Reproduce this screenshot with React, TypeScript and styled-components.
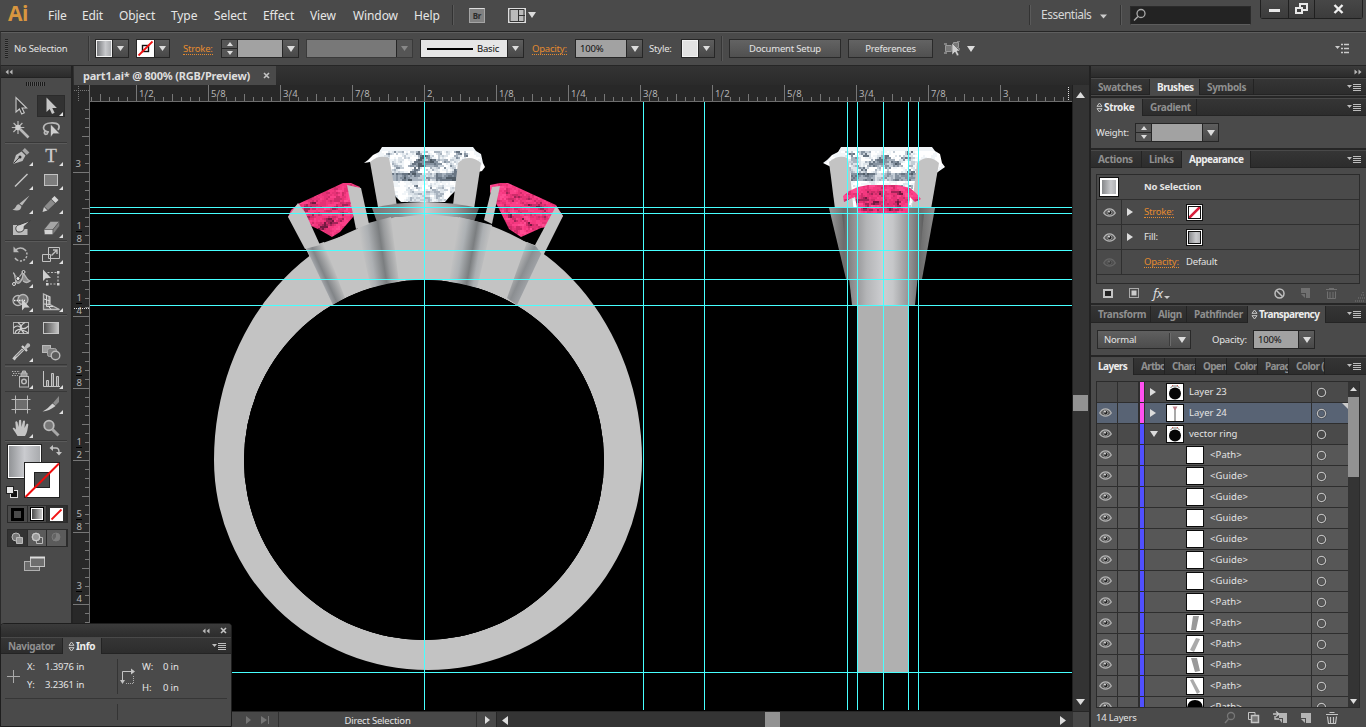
import React from "react";
import styled, { createGlobalStyle } from "styled-components";

const Global = createGlobalStyle`
  * { box-sizing: border-box; }
  body { margin: 0; background: #4a4a4a; overflow: hidden; }
  #root { width: 1366px; height: 727px; }
  svg { display: block; flex: none; }
`;

const UI = `"Noto Sans", "Open Sans", sans-serif`;

/* ---------- shell ---------- */
const App_ = styled.div`
  position: relative;
  width: 1366px;
  height: 727px;
  display: flex;
  flex-direction: column;
  overflow: hidden;
  background: #4a4a4a;
  color: #e4e4e4;
  font: 9.5px/14px ${UI};
  letter-spacing: -0.2px;
  white-space: nowrap;
`;
const Body = styled.div`
  display: flex;
  flex: none;
  height: 661px;
`;
const Spacer = styled.div<{ $w?: number; $h?: number }>`
  flex: none;
  width: ${(p) => p.$w ?? 0}px;
  height: ${(p) => p.$h ?? 0}px;
`;
const Grow = styled.div`
  flex: 1;
`;

/* ---------- menu bar ---------- */
const MenuBar = styled.div`
  height: 31px;
  flex: none;
  display: flex;
  align-items: flex-start;
  background: #4a4a4a;
`;
const Logo = styled.div`
  width: 48px;
  padding-left: 8px;
  font: bold 21px/27px "Open Sans", sans-serif;
  letter-spacing: -0.5px;
  color: #d8963f;
`;
const MenuItem = styled.div<{ $w: number }>`
  width: ${(p) => p.$w}px;
  font: 12px/31px ${UI};
  letter-spacing: -0.1px;
  color: #e6e6e6;
`;
const MenuRule = styled.div`
  width: 2px;
  height: 20px;
  margin-top: 5px;
  background: #333;
  border-right: 1px solid #5a5a5a;
`;
const BridgeIcon = styled.div`
  width: 16px;
  height: 15px;
  margin: 8px 23px 0 15px;
  border: 1px solid #a5a5a5;
  border-top-color: #ddd;
  background: #818181;
  color: #2c2c2c;
  font: bold 8px/13px ${UI};
  text-align: center;
`;
const Workspace = styled.div`
  width: 59px;
  padding-left: 10px;
  font: 12px/30px ${UI};
  letter-spacing: -0.5px;
  color: #d6d6d6;
`;
const Search = styled.div`
  width: 121px;
  height: 19px;
  margin: 6px 9px 0 8px;
  background: #232323;
  border: 1px solid #2b2b2b;
  border-bottom-color: #5c5c5c;
`;
const WinButtons = styled.div`
  display: flex;
  height: 19px;
  width: 103px;
  border: 1px solid #202020;
  border-top: 0;
  border-radius: 0 0 3px 3px;
`;
const WinButton = styled.div<{ $w: number }>`
  width: ${(p) => p.$w}px;
  height: 18px;
  display: flex;
  justify-content: center;
  align-items: center;
  border-right: 1px solid #202020;
  background: linear-gradient(#474747, #3c3c3c);
  &:last-child { border-right: 0; }
`;

/* ---------- control bar ---------- */
const ControlBar = styled.div`
  height: 35px;
  flex: none;
  display: flex;
  align-items: center;
  border-top: 1px solid #262626;
  border-bottom: 1px solid #262626;
  border-left: 1px solid #333;
  box-shadow: inset 0 1px #5e5e5e;
`;
const GripV = styled.div`
  width: 3px;
  height: 19px;
  margin: 0 6px 0 4px;
  background: repeating-linear-gradient(#222 0 1px, #565656 1px 2px);
`;
const Cell = styled.div<{ $w: number }>`
  width: ${(p) => p.$w}px;
  flex: none;
`;
const Link = styled.span`
  color: #e58a2f;
  border-bottom: 1px dotted #e58a2f;
  line-height: 11px;
  display: inline-block;
`;
const Combo = styled.div<{ $w: number; $dim?: boolean }>`
  width: ${(p) => p.$w}px;
  height: 19px;
  flex: none;
  display: flex;
  border: 1px solid ${(p) => (p.$dim ? "#3a3a3a" : "#262626")};
  background: #262626;
`;
const ComboField = styled.div<{ $bg: string }>`
  flex: 1;
  background: ${(p) => p.$bg};
  color: #101010;
  line-height: 17px;
  padding-left: 4px;
  display: flex;
  align-items: center;
  overflow: hidden;
`;
const ComboArrow = styled.div<{ $dim?: boolean }>`
  width: 15px;
  margin-left: 1px;
  display: flex;
  align-items: center;
  justify-content: center;
  background: ${(p) => (p.$dim ? "#555" : "linear-gradient(#5e5e5e, #484848)")};
`;
const Swatch = styled.div<{ $bg: string }>`
  flex: 1;
  margin: 0;
  border: 1px solid #f2f2f2;
  background: ${(p) => p.$bg};
`;
const Spinner = styled.div`
  width: 15px;
  margin-right: 1px;
  display: flex;
  flex-direction: column;
  gap: 1px;
`;
const SpinHalf = styled.div`
  flex: 1;
  background: #565656;
  display: flex;
  align-items: center;
  justify-content: center;
`;
const PushButton = styled.div<{ $w: number }>`
  width: ${(p) => p.$w}px;
  height: 19px;
  border: 1px solid #2a2a2a;
  background: linear-gradient(#636363, #505050);
  text-align: center;
  line-height: 17px;
`;
const BarRule = styled.div`
  width: 2px;
  height: 25px;
  background: #363636;
  border-right: 1px solid #585858;
`;

/* ---------- tool dock ---------- */
const ToolDock = styled.div`
  width: 73px;
  flex: none;
  border-left: 1px solid #2a2a2a;
  border-right: 2px solid #232323;
  background: #4a4a4a;
`;
const DockHead = styled.div<{ $right?: boolean }>`
  height: 12px;
  display: flex;
  align-items: center;
  justify-content: ${(p) => (p.$right ? "flex-end" : "flex-start")};
  padding: 0 4px;
  background: linear-gradient(#3b3b3b, #2b2b2b);
  border-bottom: 1px solid #222;
`;
const GripH = styled.div`
  width: 19px;
  height: 4px;
  margin: 4px 0 8px 25px;
  background: repeating-linear-gradient(90deg, #1a1a1a 0 1px, #5a5a5a 1px 2px);
`;
const ToolGroup = styled.div`
  display: grid;
  grid-template-columns: 30px 30px;
  padding-left: 5px;
`;
const ToolCell = styled.div<{ $on?: boolean }>`
  height: 24px;
  display: flex;
  align-items: center;
  justify-content: center;
  background: ${(p) => (p.$on ? "#323232" : "transparent")};
  background-clip: content-box;
  padding: 1px 1px 1px 1px;
  outline: ${(p) => (p.$on ? "1px solid #2b2b2b" : "none")};
  outline-offset: -2px;
`;
const GroupRule = styled.div<{ $h?: number }>`
  height: ${(p) => p.$h ?? 2}px;
  margin: 0 4px;
  border-top: 1px solid #383838;
  border-bottom: ${(p) => ((p.$h ?? 2) > 1 ? "1px solid #5a5a5a" : "0")};
`;
const ColorButtons = styled.div<{ $gap: number }>`
  display: flex;
  width: 61px;
  height: 18px;
  margin: ${(p) => p.$gap}px 0 6px 6px;
  border: 1px solid #2b2b2b;
  background: #3e3e3e;
`;
const ColorButton = styled.div<{ $on?: boolean }>`
  flex: 1;
  display: flex;
  align-items: center;
  justify-content: center;
  border-right: 1px solid #2b2b2b;
  background: ${(p) => (p.$on ? "#303030" : "#4b4b4b")};
`;
const ModeButton = styled(ColorButton)`
  background: ${(p) => (p.$on ? "#333" : "#5b5b5b")};
`;

/* ---------- document ---------- */
const Doc = styled.div`
  width: 1016px;
  flex: none;
  background: #2f2f2f;
`;
const DocTabs = styled.div`
  height: 19px;
  display: flex;
  padding-left: 1px;
  background: linear-gradient(#343434, #2a2a2a);
`;
const DocTab = styled.div`
  width: 202px;
  height: 19px;
  padding: 0 6px 0 9px;
  display: flex;
  align-items: center;
  justify-content: space-between;
  background: #4a4a4a;
  font: bold 11px/19px ${UI};
  letter-spacing: -0.21px;
  color: #dedede;
`;
const Work = styled.div`
  display: grid;
  grid-template-columns: 17px 982px 17px;
  grid-template-rows: 17px 609px 17px;
`;
const VScroll = styled.div`
  grid-row: 1 / span 2;
  grid-column: 3;
  border-left: 1px solid #1f1f1f;
  background: #333;
  display: flex;
  flex-direction: column;
  align-items: center;
  padding: 7px 1px 0 0;
`;
const Thumb = styled.div<{ $w: number; $h: number }>`
  width: ${(p) => p.$w}px;
  height: ${(p) => p.$h}px;
  flex: none;
  background: #929292;
`;
const Status = styled.div`
  grid-column: 1 / span 3;
  height: 17px;
  display: flex;
  align-items: center;
  border-top: 1px solid #262626;
  padding-left: 162px;
  background: #484848;
`;
const StatusText = styled.div`
  width: 199px;
  height: 16px;
  border-left: 1px solid #303030;
  border-right: 1px solid #303030;
  text-align: center;
  line-height: 18px;
`;
const HScroll = styled.div`
  width: 577px;
  height: 16px;
  display: flex;
  align-items: center;
  padding-left: 5px;
  border-left: 1px solid #262626;
  background: #343434;
`;

/* ---------- panels ---------- */
const PanelDock = styled.div`
  width: 277px;
  flex: none;
  border-left: 2px solid #222;
  background: #262626;
`;
const Panel = styled.div<{ $h: number }>`
  height: ${(p) => p.$h}px;
  margin-bottom: 2px;
  background: #4a4a4a;
  overflow: hidden;
`;
const Tabs = styled.div<{ $h?: number }>`
  height: ${(p) => p.$h ?? 18}px;
  display: flex;
  background: linear-gradient(#353535, #2c2c2c);
  border-top: 1px solid #494949;
  box-shadow: inset 0 -1px #242424;
`;
const Tab = styled.div<{ $w: number; $on?: boolean; $ls?: number; $pl?: number }>`
  width: ${(p) => p.$w}px;
  flex: none;
  padding-left: ${(p) => p.$pl ?? 7}px;
  overflow: hidden;
  display: flex;
  align-items: center;
  background: ${(p) => (p.$on ? "#4a4a4a" : "transparent")};
  border-right: 1px solid #232323;
  font: bold 10px/15px ${UI};
  letter-spacing: ${(p) => p.$ls ?? -0.35}px;
  color: ${(p) => (p.$on ? "#ededed" : "#8f8f8f")};
`;
const TabMenu = styled.div`
  margin: 4px 5px 0 auto;
`;
const Row = styled.div<{ $pl?: number; $h?: number }>`
  display: flex;
  align-items: center;
  height: ${(p) => p.$h ?? 32}px;
  padding-left: ${(p) => p.$pl ?? 0}px;
`;
const AppearanceBox = styled.div`
  width: 264px;
  height: 110px;
  margin: 6px 0 0 5px;
  border: 1px solid #2b2b2b;
`;
const AppRow = styled.div`
  height: 25px;
  display: flex;
  align-items: center;
  border-bottom: 1px solid #2f2f2f;
`;
const AppEye = styled.div<{ $faint?: boolean }>`
  width: 25px;
  height: 24px;
  display: flex;
  align-items: center;
  justify-content: center;
  border-right: 1px solid #2f2f2f;
  svg { opacity: ${(p) => (p.$faint ? 0.25 : 1)}; }
`;
const Chip = styled.div<{ $s: number; $bg: string }>`
  width: ${(p) => p.$s}px;
  height: ${(p) => p.$s}px;
  border: 1px solid #111;
  box-shadow: inset 0 0 0 1px #fff, inset 0 0 0 2px ${(p) => (p.$s < 18 ? "#111" : "#fff")};
  background: ${(p) => p.$bg};
`;
const Dropdown = styled.div`
  width: 94px;
  height: 19px;
  border: 1px solid #292929;
  background: linear-gradient(#606060, #4c4c4c);
  display: flex;
  align-items: center;
  padding: 0 4px 0 6px;
`;
const DropdownRule = styled.div`
  width: 2px;
  height: 13px;
  margin: 0 7px 0 auto;
  background: #3c3c3c;
  border-right: 1px solid #6c6c6c;
`;
const LayerBox = styled.div`
  width: 264px;
  height: 327px;
  margin: 6px 0 0 5px;
  display: flex;
  border: 1px solid #2b2b2b;
`;
const LayerList = styled.div`
  width: 251px;
  flex: none;
  height: 325px;
  overflow: hidden;
`;
const LayerRow = styled.div<{ $kind: "top" | "sel" | "item" }>`
  height: 21px;
  display: flex;
  border-bottom: 1px solid #2e2e2e;
  background: ${(p) => ({ top: "#4a4a4a", sel: "#586374", item: "#575757" })[p.$kind]};
  position: relative;
`;
const LayerCell = styled.div<{ $w: number }>`
  width: ${(p) => p.$w}px;
  display: flex;
  align-items: center;
  justify-content: center;
  padding: 0 3px 2px 0;
  border-right: 1px solid #2e2e2e;
`;
const Strip = styled.div<{ $c: string }>`
  width: 6px;
  border: 1px solid #2e2e2e;
  border-width: 0 1px 0 1px;
  padding: 0;
  background: ${(p) => p.$c};
`;
const LayerName = styled.div<{ $nested?: boolean }>`
  width: 167px;
  display: flex;
  align-items: center;
  padding-left: ${(p) => (p.$nested ? 41 : 5)}px;
  border-right: 1px solid #2e2e2e;
  letter-spacing: ${(p) => (p.$nested ? 0.1 : 0)}px;
`;
const LayerScroll = styled.div`
  width: 11px;
  background: #343434;
  display: flex;
  flex-direction: column;
  align-items: center;
  padding: 5px 0 3px;
`;
const Footer = styled.div`
  height: 19px;
  padding: 0 0 0 5px;
  display: flex;
  align-items: center;
`;

/* ---------- floating info panel ---------- */
const InfoWindow = styled.div`
  position: absolute;
  left: 0;
  top: 623px;
  width: 232px;
  height: 104px;
  border: 1px solid #1e1e1e;
  border-radius: 4px 4px 0 0;
  background: #4a4a4a;
  overflow: hidden;
`;
const InfoHead = styled.div`
  height: 13px;
  display: flex;
  justify-content: flex-end;
  align-items: center;
  gap: 10px;
  padding-right: 4px;
  background: linear-gradient(#3b3b3b, #2c2c2c);
`;
const InfoGrid = styled.div`
  display: flex;
  margin: 0 4px;
  height: 45px;
  border-bottom: 1px solid #363636;
`;
const InfoCol = styled.div<{ $w: number; $gap: number }>`
  width: ${(p) => p.$w}px;
  padding-top: 6px;
  display: flex;
  flex-direction: column;
  gap: ${(p) => p.$gap}px;
  letter-spacing: -0.15px;
`;
const InfoRule = styled.div<{ $h: number }>`
  width: 1px;
  height: ${(p) => p.$h}px;
  margin-top: 5px;
  background: #343434;
`;
const InfoFoot = styled.div`
  padding-left: 116px;
`;

/* ---------- small glyphs ---------- */
const Tri = ({ d = "down", w = 8, h = 6, c = "#dcdcdc" }: { d?: string; w?: number; h?: number; c?: string }) => {
  const pts: Record<string, string> = {
    down: `0,0 ${w},0 ${w / 2},${h}`,
    up: `0,${h} ${w},${h} ${w / 2},0`,
    right: `0,0 ${w},${h / 2} 0,${h}`,
    left: `${w},0 0,${h / 2} ${w},${h}`,
  };
  return (
    <svg width={w} height={h}>
      <polygon points={pts[d]} fill={c} />
    </svg>
  );
};
const Double = ({ left }: { left?: boolean }) => (
  <svg width="8" height="6" fill="#b8b8b8">
    <path d={left ? "M3.5 .5V5.5L.5 3ZM7.5 .5V5.5L4.5 3Z" : "M.5 .5V5.5L3.5 3ZM4.5 .5V5.5L7.5 3Z"} />
  </svg>
);
const MenuGlyph = () => (
  <svg width="14" height="9">
    <path d="M0 2h5L2.5 5Z" fill="#bdbdbd" />
    <path d="M6 1.500h8M6 3.500h8M6 5.500h8M6 7.500h8" stroke="#bdbdbd" />
  </svg>
);
const Cross = () => (
  <svg width="7" height="7">
    <path d="M1 1l5 5M6 1l-5 5" stroke="#c4c4c4" strokeWidth="1.6" />
  </svg>
);
const SortMark = styled.svg`
  margin: 0 1px 0 -3px;
`;
const UpDown = () => (
  <SortMark width="7" height="11">
    <path d="M3.500 1L6 4.300H1ZM3.500 10L6 6.700H1Z" fill="none" stroke="#c9c9c9" />
  </SortMark>
);
const Eye = () => (
  <svg width="13" height="9">
    <path d="M.7 5C2.5 1.6 4.5 .9 6.5 .9S10.5 1.6 12.3 5C10.5 7.6 8.5 8.2 6.5 8.2S2.500 7.600 .7 5Z" fill="#5c5c5c" stroke="#b4b4b4" strokeWidth="1.300" />
    <circle cx="6.6" cy="4.500" r="2.200" fill="#1e1e1e" stroke="#b0b0b0" strokeWidth=".7" />
    <circle cx="6" cy="3.700" r=".9" fill="#eee" />
  </svg>
);
const Target = () => (
  <svg width="19" height="20">
    <circle cx="9.500" cy="10.500" r="4" fill="none" stroke="#2e2e2e" strokeWidth="2.600" opacity=".45" />
    <circle cx="9.500" cy="10.500" r="4.100" fill="none" stroke="#bdbdbd" strokeWidth="1.300" />
  </svg>
);
const STEEL = "linear-gradient(90deg,#77797c,#c8c9cc 60%,#a9abae)";

/* ---------- tool icons ---------- */
const G = "#b9b9b9";
const icons: Record<string, React.ReactNode> = {
  select: <path d="M7 3.500V18l3.400-3 2.300 5 2.600-1.200-2.300-4.800h4.600Z" fill="#3c3c3c" stroke="#c8c8c8" strokeWidth="1.100" />,
  direct: <path d="M7.500 3.500V18l3.200-3 2.300 5 2.600-1.200-2.300-4.800h4.600Z" fill="#c6c6c6" />,
  wand: (
    <g stroke={G} fill="none">
      <path d="M9 3v13M2.800 9.500h12.500M4.600 5l9 9M13.400 5l-9 9" strokeWidth="1.200" />
      <circle cx="9" cy="9.500" r="2.800" fill="#d0d0d0" stroke="none" />
      <path d="M11 11l8.500 8.500" strokeWidth="2.600" />
    </g>
  ),
  lasso: (
    <g fill="none" stroke={G} strokeWidth="1.700">
      <path d="M10 14C2 13 3 5.500 11.500 5S21.500 8 19 12M7 13c-3 1-1.500 4 1 3 1.500-1-1-4-3-3" />
      <path d="M11.500 6v13.500l2.800-3.700H21Z" fill="#cfcfcf" stroke="#444" strokeWidth=".6" />
    </g>
  ),
  pen: (
    <g>
      <path d="M4 20L7 11l5.500-3.500 4 4L13.500 17Z" fill="#bdbdbd" />
      <path d="M13.300 6.500l2.600-2.600 4.500 4.500-2.600 2.600Z" fill="#a6a6a6" />
      <path d="M4.500 19.500l6-6.200" stroke="#333" />
      <circle cx="11" cy="13" r="1.500" fill="#333" />
    </g>
  ),
  line: <path d="M6 18.500L18.500 6" stroke="#c6c6c6" strokeWidth="1.400" />,
  rect: <rect x="5.500" y="6.500" width="13" height="11" fill="#7d7d7d" stroke="#c2c2c2" />,
  brush: (
    <g fill={G}>
      <path d="M20.500 3.500L13 13.500l-2.500-2Z" />
      <path d="M10 12.300l2.400 2C12.500 18.500 8 19.500 3.500 17.500 7.500 17 6.500 12 10 12.300Z" />
    </g>
  ),
  pencil: (
    <g>
      <path d="M15.500 4l4 4-3 3-4-4Z" fill="#d6d6d6" />
      <path d="M12 7.500l4 4L9 18 5.500 14.500Z" fill="#8b8b8b" />
      <path d="M5 15l3.500 3.500L3.500 20Z" fill="#cecece" />
    </g>
  ),
  blob: (
    <g>
      <path d="M4 9h8l-1 4h7.500V19H4Z" fill="#bcbcbc" />
      <path d="M21.500 4.500L15 10.500c1 4-2 6-6.500 5.500C5.500 13 6.500 9.500 11 8.500Z" fill="#d0d0d0" stroke="#3c3c3c" />
    </g>
  ),
  eraser: (
    <g stroke="#4a4a4a" strokeWidth=".5">
      <path d="M11.500 5.500h9l-6.500 8H5Z" fill="#a5a5a5" />
      <path d="M5 13.500h9V18.500H5.500Z" fill="#d3d3d3" />
      <path d="M20.500 5.500V10L14 18.500v-5Z" fill="#7e7e7e" />
    </g>
  ),
  rotate: (
    <g fill="none" stroke={G} strokeWidth="1.500">
      <path d="M6.500 8.300A6.500 6.500 0 1 1 6 16" strokeDasharray="12 1.500 2 1.500 2 1.500 2 1.500 2 1.500" />
      <path d="M4.500 4.500v5.800h5.500Z" fill={G} stroke="none" />
    </g>
  ),
  scale: (
    <g fill="none" stroke="#c2c2c2">
      <path d="M9.500 5.500h11v11h-11Z" />
      <path d="M3.500 12.500h8v7h-8Z" />
      <path d="M12.500 13.500l5-5M14 8h4v4" strokeWidth="1.400" />
    </g>
  ),
  width: (
    <g fill="none" stroke={G}>
      <path d="M4 7c3 0 1 7 4 10 3 2 6-5 6-9 3 0 2 5 7 7-3 2-4 2-7 0" fill="#8d8d8d" strokeWidth="1.300" />
      <path d="M5 18L14 6" strokeWidth="1.200" />
      <circle cx="9" cy="12.500" r="2" fill="#eee" stroke="#444" />
      <circle cx="14.500" cy="6" r="1.500" fill="#444" stroke="#ddd" />
      <circle cx="5" cy="18" r="1.500" fill="#444" stroke="#ddd" />
    </g>
  ),
  free: (
    <g>
      <path d="M8.500 6.500h10.500v11.500h-11v-6" fill="none" stroke={G} strokeWidth="1.200" strokeDasharray="2 1.500" />
      <path d="M4 3.500v11.500l3-3h5Z" fill="#cfcfcf" />
      <path d="M18 5h2.500v2.500H18ZM18 17h2.500v2.500H18ZM7 17h2.500v2.500H7Z" fill="#d6d6d6" />
    </g>
  ),
  builder: (
    <g fill="none" stroke={G} strokeWidth="1.300">
      <circle cx="9" cy="10.500" r="5" />
      <circle cx="14" cy="9.500" r="5" fill="#777" />
      <path d="M5 10.500h11" stroke="#eee" strokeDasharray="1.500 1" />
      <path d="M13 9v11.500l2.700-3h5Z" fill="#d0d0d0" stroke="none" />
    </g>
  ),
  perspective: (
    <g fill="none" stroke={G}>
      <path d="M4.500 4v15.500H20.500L11 14.500V7Z" fill="#606060" strokeWidth="1.300" />
      <path d="M7.500 5v11.500h6.500M10 6v8.500M5 9l6 2M5 14l6 .5M12 19.500l-3-4" stroke="#d7d7d7" />
    </g>
  ),
  mesh: (
    <g fill="none" stroke="#d0d0d0" strokeWidth="1.200">
      <rect x="4.500" y="6.500" width="15" height="11" stroke="#b5b5b5" strokeWidth="1" />
      <path d="M4.500 12c4-4 6-1 8 0s4 1 7-2M6 17c1-4 5-4 7-3s4 1 6 3M9 6.500c4 3 4 6 0 11M16 6.500c-6 3-4 7-1 11" />
    </g>
  ),
  gradient: <rect x="4.500" y="6.500" width="15" height="11" fill="url(#toolGrad)" stroke="#c6c6c6" />,
  dropper: (
    <g>
      <path d="M13 6l5 5" stroke="#d6d6d6" strokeWidth="2.200" />
      <path d="M14.500 8.500l3.500-5c2-1 4 1 2.800 3L16 10Z" fill={G} />
      <path d="M14 9.500L6 17.500 4.500 19.500" stroke="#c9c9c9" strokeWidth="3" fill="none" />
      <path d="M13.500 10L7 16.500" stroke="#555" />
    </g>
  ),
  blend: (
    <g stroke={G}>
      <rect x="3.500" y="5.500" width="8" height="7" fill="#9b9b9b" />
      <rect x="8.500" y="8.500" width="9" height="8" rx="2" fill="#7b7b7b" stroke="#aaa" />
      <circle cx="16.500" cy="15.500" r="4.300" fill="#5c5c5c" stroke="#bbb" strokeWidth="1.400" />
    </g>
  ),
  spray: (
    <g stroke={G} fill="none">
      <rect x="10.500" y="9.500" width="9" height="10.500" />
      <path d="M12 9V6h6v3M13.500 6V4h3v2" fill="#999" />
      <circle cx="15" cy="14.500" r="2.300" strokeWidth="1.500" />
      <path d="M3 4.500h8M4 6.500h7M3 8.500h6" strokeDasharray="1.300 1.300" />
    </g>
  ),
  graph: (
    <g stroke="#c6c6c6" fill="#777">
      <path d="M4.500 4v15.500H21" fill="none" />
      <path d="M7.500 13.500h2v6h-2ZM12.500 6.500h2v13h-2ZM17.500 9.500h2v10h-2Z" />
    </g>
  ),
  artboard: (
    <g stroke={G} fill="none">
      <rect x="6.500" y="7.500" width="12" height="10" fill="#6d6d6d" />
      <path d="M2.500 7.500h19M2.500 17.500h19M6.500 3.500v18M18.500 3.500v18" />
    </g>
  ),
  slice: (
    <g>
      <path d="M14 11l6-7v6l-3.500 3.500Z" fill="#8a8a8a" />
      <path d="M13.500 11.500l3 2.500C12 17.500 8 19 3.500 19.500 8 17.500 10 14.500 13.500 11.500Z" fill="#d0d0d0" />
    </g>
  ),
  hand: (
    <path
      d="M8.500 20C7 17 5 15 3.700 12.500c.2-1.200 1.800-.8 3.300 1.300L6.300 6c.7-1.500 2-.7 2.300.5L9.500 11 10 4.500c.6-1.300 2-1 2.200 0L12.500 11l1.500-6c.8-1 2-.5 2 .7L15.500 12l2-4c1-.8 2-.2 1.800 1-.8 4-1 8-3.300 11Z"
      fill="#c4c4c4"
    />
  ),
  zoom: (
    <g fill="none">
      <circle cx="10" cy="9.500" r="4.800" fill="#777" stroke="#bbb" strokeWidth="1.800" />
      <path d="M13.500 13.500l6 6" stroke="#a8a8a8" strokeWidth="3" />
    </g>
  ),
};
const plain = ["select", "wand", "lasso", "blob", "free", "mesh", "gradient", "blend", "artboard", "zoom"];
const ToolIcon = ({ name }: { name: string }) => (
  <svg width="30" height="24" viewBox="-3 0 30 24">
    {name === "type" ? (
      <text x="12" y="18" textAnchor="middle" fontFamily="Liberation Serif, serif" fontSize="19" fill="#d0d0d0" stroke="#c4c4c4" strokeWidth=".3">
        T
      </text>
    ) : (
      icons[name]
    )}
    {!plain.includes(name) && <path d="M25 19v4h-4Z" fill="#e0e0e0" transform="translate(-1,-1)" />}
  </svg>
);
const Tools = ({ items, on }: { items: string[]; on?: string }) => (
  <ToolGroup>
    {items.map((n) => (
      <ToolCell key={n} $on={n === on}>
        <ToolIcon name={n} />
      </ToolCell>
    ))}
  </ToolGroup>
);

const FillStroke = () => (
  <svg width="70" height="61">
    <defs>
      <linearGradient id="toolGrad">
        <stop offset="0" stopColor="#4a4a4a" />
        <stop offset="1" stopColor="#c8c8c8" />
      </linearGradient>
      <linearGradient id="fillGrad">
        <stop offset="0" stopColor="#919396" />
        <stop offset=".5" stopColor="#cacbcf" />
        <stop offset="1" stopColor="#a9abae" />
      </linearGradient>
    </defs>
    <rect x="6.500" y="2.500" width="34" height="34" fill="#fff" stroke="#222" />
    <rect x="8" y="4" width="31" height="31" fill="url(#fillGrad)" />
    <rect x="23.500" y="20.500" width="35" height="35" fill="#fff" stroke="#222" />
    <rect x="33.500" y="30.500" width="15" height="15" fill="#4a4a4a" stroke="#222" />
    <path d="M24.500 55L58 21.500" stroke="#f00c0c" strokeWidth="2" />
    <path d="M51 6h4q3 0 3 4v2" fill="none" stroke="#c2c2c2" strokeWidth="1.300" />
    <path d="M52 3v6l-3.500-3ZM55 10h6l-3 3.500Z" fill="#c2c2c2" />
    <rect x="9.500" y="48.500" width="7" height="7" fill="#111" stroke="#ddd" />
    <rect x="5.500" y="44.500" width="7" height="7" fill="#e8e8e8" stroke="#222" />
  </svg>
);
const NoneGlyph = ({ s, box }: { s: number; box?: boolean }) => (
  <svg width={s} height={s}>
    <rect width={s} height={s} fill="#fff" />
    {box && <rect x={s / 2 - 3} y={s / 2 - 3} width="6" height="6" fill="#fff" stroke="#111" strokeWidth="1.400" />}
    <path d={`M1.500 ${s - 1.500}L${s - 1.500} 1.500`} stroke="#f01414" strokeWidth="1.800" />
  </svg>
);

/* ---------- rulers ---------- */
const hLabels = ["1/2", "5/8", "3/4", "7/8", "2", "1/8", "1/4", "3/8", "1/2", "5/8", "3/4", "7/8", "3"];
const RulerCorner = () => (
  <svg width="17" height="17">
    <rect width="17" height="17" fill="#282828" />
    <path d="M1 5.500h15M5.500 1v15" stroke="#777" strokeDasharray="1 1" />
    <path d="M16.500 0v17" stroke="#6c6c6c" />
  </svg>
);
const HRuler = () => {
  const ticks = [];
  for (let x = 1.500; x < 982; x += 9) {
    const k = Math.round((x - 46.500) / 9);
    const h = k % 8 === 0 ? 16 : k % 4 === 0 ? 7 : 4;
    ticks.push(<path key={x} d={`M${x} 16V${16 - h}`} stroke="#777" />);
  }
  return (
    <svg width="982" height="17">
      <rect width="982" height="17" fill="#282828" />
      {ticks}
      {hLabels.map((t, i) => (
        <text key={i} x={49 + i * 72} y="12" fontFamily="Noto Sans" fontSize="9.500" letterSpacing=".1" fill="#b4b4b4">
          {t}
        </text>
      ))}
      <path d="M978.500 2v14" stroke="#ddd" strokeDasharray="1 1" />
      <path d="M0 16.500h982" stroke="#6c6c6c" />
    </svg>
  );
};
const vLabels = ["3", "1/8", "1/4", "3/8", "1/2", "5/8", "3/4"];
const VRuler = () => {
  const ticks = [];
  for (let y = 7.500; y < 609; y += 9) {
    const k = Math.round((y - 70.500) / 9);
    const w = k % 8 === 0 ? 16 : k % 4 === 0 ? 7 : 4;
    ticks.push(<path key={y} d={`M16 ${y}H${16 - w}`} stroke="#777" />);
  }
  return (
    <svg width="17" height="609">
      <rect width="17" height="609" fill="#282828" />
      {ticks}
      {vLabels.map((t, i) => {
        const y = i * 72 + 57;
        const [a, b] = t.split("/");
        return (
          <g key={i} fontFamily="Noto Sans" fontSize="9.500" fill="#b4b4b4" textAnchor="middle">
            <text x={b ? 6 : 5} y={b ? y - 2 : 65}>{a}</text>
            {b && <path d={`M3 ${y + 0.500}h6`} stroke="#000" />}
            {b && <text x="6" y={y + 11}>{b}</text>}
          </g>
        );
      })}
      <path d="M1 206.500h15" stroke="#ddd" strokeDasharray="1 1" />
      <path d="M16.500 0v609" stroke="#6c6c6c" />
    </svg>
  );
};

/* ---------- artwork ---------- */
const noise = (x: number, y: number) => {
  const v = Math.sin(x * 12.9898 + y * 78.233) * 43758.5453;
  return v - Math.floor(v);
};
const DIAMOND = ["#ffffff", "#f1f5f8", "#dde4ea", "#c4cdd6", "#a7b2be", "#8592a0", "#687583", "#4f5b66"];
const PINK = ["#ff4c92", "#fb4089", "#f4387f", "#e63276", "#cf2c6a", "#a32458", "#741940"];
const Mosaic = ({ x0, y0, w, h, kind, tilt = 0 }: { x0: number; y0: number; w: number; h: number; kind: "d" | "p"; tilt?: number }) => {
  const s = 2;
  const out: React.ReactNode[] = [];
  const cx = x0 + w / 2;
  for (let y = y0; y < y0 + h; y += s)
    for (let x = x0; x < x0 + w; x += s) {
      const dx = Math.abs(x - cx);
      const ty = y - y0;
      const v = y + (x - cx) * tilt;
      const raw = noise(Math.floor((x + ty) / 7), Math.floor((v - x * 0.4) / 5)) * 0.45 + noise(Math.floor((x - ty) / 5), Math.floor((v + x * 0.3) / 4) + 9) * 0.4 + noise(x, y) * 0.15;
      const n = Math.min(1, Math.max(0, (raw - 0.5) * 1.6 + 0.5));
      let t: number;
      if (kind === "d") {
        t = n * n * 0.75;
        if (ty > 7 && ty < 19 && dx < (ty - 5) * 1.4) t = 0.42 + n * 0.5;
        if (ty > 8 && ty < 20 && dx > 23 && dx < 34) t = 0.1 + n * 0.55;
        if (ty > 25 && ty < 33 && dx < 34) t = (dx > 10 ? 0.5 : 0.28) + n * 0.42;
        if (ty > 32 && ty < 38) t = n * 0.35;
        if (ty > 42 && dx < 18) t = 0.08 + n * 0.5;
        if (dx > w / 2 - 20) t = n * 0.22;
        if (ty < 3) t = 0.15;
      } else {
        const ry = v - y0 - h / 2;
        t = 0.08 + n * 0.55;
        if (Math.abs(ry + h * 0.16) < 4 && dx < w * 0.28) t = 0.2 + n * 0.7;
        if (Math.abs(ry - h * 0.02) < 1.500) t = 0.3 + n * 0.5;
        if (Math.abs(ry - h * 0.22) < 5 && dx < w * 0.25) t = 0.1 + n * 0.8;
      }
      const pal = kind === "d" ? DIAMOND : PINK;
      out.push(<rect key={`${x},${y}`} x={x} y={y} width={s} height={s} fill={pal[Math.min(pal.length - 1, Math.floor(t * pal.length))]} />);
    }
  return <>{out}</>;
};
const Stops = ({ list }: { list: [number, string][] }) => (
  <>
    {list.map(([o, c]) => (
      <stop key={o} offset={o} stopColor={c} />
    ))}
  </>
);
const vGuides = [424, 643, 704, 847, 857, 883, 908, 918];
const hGuides = [207, 213, 250, 279, 305, 672];
const Artwork = () => (
  <svg width="982" height="609" viewBox="90 102 982 609">
    <defs>
      <clipPath id="gemC">
        <path d="M364 163l4-3 5-5 6-3 3-5h91l3 4 5 3 2 9 2 4-3 4-8 2-23 22-6 7H401l-8-8-9-24-14-8Z" />
      </clipPath>
      <clipPath id="gemL">
        <path d="M288 217l3-7 7-6 45-21h8l9 4-7 30-13 15-8 5-12-7-22-10Z" />
      </clipPath>
      <clipPath id="gemR">
        <path d="M490 192v-7l10-2h8l48 22 7 11-6 9-16 3-20 9-12-8-10-20Z" />
      </clipPath>
      <clipPath id="gemS">
        <path d="M823 163l4-3 5-5 6-3 3-5h91l3 4 5 3 2 9 3 4-10 7-17 39H853l-20-45Z" />
      </clipPath>
      <clipPath id="gemP">
        <path d="M843 196l6-5 9-4 10-2h30l12 3 6 5 5 6-6 3-5-5-2 16H858l-3-16-5 2-6 3Z" />
      </clipPath>
      <linearGradient id="collar">
        <Stops list={[[0, "#777"], [0.25, "#8a8c8e"], [0.5, "#cacbcd"], [0.75, "#a0a2a4"], [1, "#555"]]} />
      </linearGradient>
      <linearGradient id="bandA" gradientUnits="userSpaceOnUse" x1="312" y1="277" x2="334" y2="267">
        <Stops list={[[0, "#b5b8bb"], [0.3, "#a0a3a7"], [0.5, "#828588"], [1, "#c3c3c3"]]} />
      </linearGradient>
      <linearGradient id="bandB" gradientUnits="userSpaceOnUse" x1="362" y1="252" x2="396" y2="247">
        <Stops list={[[0, "#c3c3c3"], [0.25, "#adb0b3"], [0.58, "#7b7e80"], [0.72, "#999b9d"], [1, "#c3c3c3"]]} />
      </linearGradient>
      <linearGradient id="bandC" gradientUnits="userSpaceOnUse" x1="488" y1="252" x2="454" y2="246">
        <Stops list={[[0, "#c3c3c3"], [0.25, "#acafb2"], [0.45, "#7b7e80"], [0.75, "#adb1b4"], [1, "#c3c3c3"]]} />
      </linearGradient>
      <linearGradient id="bandD" gradientUnits="userSpaceOnUse" x1="535" y1="281" x2="511" y2="270">
        <Stops list={[[0, "#b5b8bb"], [0.2, "#a0a3a7"], [0.55, "#8b8e91"], [1, "#c3c3c3"]]} />
      </linearGradient>
      <linearGradient id="coneOut">
        <Stops list={[[0, "#9b9b9b"], [0.14, "#6d6d6d"], [0.5, "#aaa"], [0.86, "#6d6d6d"], [1, "#8f8f8f"]]} />
      </linearGradient>
      <linearGradient id="coneIn">
        <Stops list={[[0, "#5b5b5b"], [0.1, "#858688"], [0.3, "#b4b5b7"], [0.5, "#cdced1"], [0.62, "#c6c7c9"], [0.85, "#8a8b8d"], [1, "#5c5c5c"]]} />
      </linearGradient>
    </defs>
    <rect x="90" y="102" width="982" height="609" fill="#000" />

    <g shapeRendering="crispEdges">
      <g clipPath="url(#gemC)"><Mosaic x0={364} y0={147} w={122} h={58} kind="d" /></g>
      <g clipPath="url(#gemL)"><Mosaic x0={286} y0={182} w={76} h={56} kind="p" tilt={0.35} /></g>
      <g clipPath="url(#gemR)"><Mosaic x0={488} y0={182} w={76} h={56} kind="p" tilt={-0.35} /></g>
    </g>
    <path d="M370 162q9-8 19-4l3 15 5 34h-19Z" fill="#c3c3c3" />
    <path d="M458 163q11-10 23 0l-7 46-21-4Z" fill="#c3c3c3" />
    <path d="M372 208Q424 196 479 208L474 222H377Z" fill="url(#collar)" />

    <path d="M214 460a214 245 0 0 1 428 0a214 210 0 0 1-428 0ZM244 460a180 180 0 0 0 360 0a180 180 0 0 0-360 0Z" fill="#c3c3c3" fillRule="evenodd" />
    <path d="M305 247l15-3L395 217h62l86 31-26 57-14-8Q424 262 343 299l-10 7Z" fill="#c3c3c3" />
    <path d="M244 460a180 180 0 0 0 360 0a180 180 0 0 0-360 0Z" fill="#000" />
    <path d="M306 248l18-6 21 56-12 7Z" fill="url(#bandA)" />
    <path d="M357 226l34-9 8 65-28 6Z" fill="url(#bandB)" />
    <path d="M492 225l-33-8-10 65 28 6Z" fill="url(#bandC)" />
    <path d="M543 250l-16-8-20 56 10 7Z" fill="url(#bandD)" />
    <path d="M244 460a180 180 0 0 0 360 0a180 180 0 0 0-360 0Z" fill="#000" />
    <path d="M298 203l7 9 15 33-15 4-17-32Z" fill="#c3c3c3" />
    <path d="M347 185l14 3 8 36-13 5Z" fill="#c3c3c3" />
    <path d="M492 187l8-1-8 38-8-4Z" fill="#c3c3c3" />
    <path d="M556 206l7 10-20 40-8-11Z" fill="#c3c3c3" />

    <g clipPath="url(#gemS)" shapeRendering="crispEdges"><Mosaic x0={823} y0={147} w={122} h={66} kind="d" /></g>
    <path d="M829 162q9-8 19-4l2 15 4 41-19-5Z" fill="#c3c3c3" />
    <path d="M917 163q11-10 22 0l-8 46-20 5Z" fill="#c3c3c3" />
    <path d="M829 208H935L922 279H846Z" fill="url(#coneOut)" />
    <path d="M842 213H924L915 305H852Z" fill="url(#coneIn)" />
    <g clipPath="url(#gemP)" shapeRendering="crispEdges"><Mosaic x0={843} y0={185} w={78} h={28} kind="p" /></g>
    <rect x="857" y="305" width="52" height="367" fill="#b0b0b0" />

    <g shapeRendering="crispEdges" fill="#47ffff">
      {vGuides.map((x) => (
        <rect key={x} x={x} y="102" width="1" height="608" />
      ))}
      {hGuides.map((y) => (
        <rect key={y} x="90" y={y} width="982" height="1" />
      ))}
    </g>
  </svg>
);

/* ---------- layer thumbnails ---------- */
const LayerThumb = ({ kind }: { kind: string }) => (
  <svg width="18" height="18">
    <rect x=".5" y=".5" width="17" height="17" fill="#fff" stroke="#0a0a0a" />
    {kind === "ring" && (
      <g>
        <circle cx="9" cy="10.500" r="6" fill="#050505" />
        <path d="M4.500 5l2-2h5l2 2" stroke="#777" fill="none" />
        <path d="M6 2.500h1M11 2.500h1" stroke="#d65" />
      </g>
    )}
    {kind === "side" && (
      <g>
        <path d="M9 5v12" stroke="#8c8c8c" strokeWidth="1.500" />
        <path d="M6.500 2.500h5L9.500 6h-1Z" fill="#c0808c" />
      </g>
    )}
    {kind === "p1" && <path d="M7 2h6l-3 14H5Z" fill="#999" />}
    {kind === "p2" && <path d="M10 3l4 1-6 13-4-2Z" fill="#aaa" />}
    {kind === "p3" && <path d="M5 2h6l3 13-5 1Z" fill="#999" />}
    {kind === "p4" && <path d="M4 3l3-1 7 13-3 2Z" fill="#aaa" />}
    {kind === "dark" && <path d="M1 12q0-10 8-10t8 10v6H1Z" fill="#000" />}
  </svg>
);
const layers: { name: string; thumb: string; kind: "top" | "sel" | "item"; open?: boolean; hidden?: boolean }[] = [
  { name: "Layer 23", thumb: "ring", kind: "top", hidden: true },
  { name: "Layer 24", thumb: "side", kind: "sel" },
  { name: "vector ring", thumb: "ring", kind: "top", open: true },
  ...["Path", "Guide", "Guide", "Guide", "Guide", "Guide", "Guide", "Path", "Path", "Path", "Path", "Path", "Path"].map((n, i) => ({
    name: `<${n}>`,
    thumb: ["", "", "", "", "", "", "", "", "p1", "p2", "p3", "p4", "dark"][i],
    kind: "item" as const,
  })),
];
const Corner = styled.div`
  position: absolute;
  top: 0;
  right: 0;
  border: 3px solid transparent;
  border-top-color: #ccc;
  border-right-color: #ccc;
`;

const NumField = ({ w, value, pad }: { w: number; value?: string; pad?: number }) => (
  <Combo $w={w}>
    {pad ? (
      <Spinner>
        <SpinHalf><Tri d="up" w={6} h={4} /></SpinHalf>
        <SpinHalf><Tri w={6} h={4} /></SpinHalf>
      </Spinner>
    ) : null}
    <ComboField $bg="#a2a2a2">{value}</ComboField>
    <ComboArrow><Tri /></ComboArrow>
  </Combo>
);

const menus: [string, number][] = [
  ["File", 34], ["Edit", 37], ["Object", 52], ["Type", 43], ["Select", 49], ["Effect", 47], ["View", 43], ["Window", 61], ["Help", 38],
];

export default function App() {
  return (
    <App_>
      <Global />
      <MenuBar>
        <Logo>Ai</Logo>
        {menus.map(([t, w]) => (
          <MenuItem key={t} $w={w}>{t}</MenuItem>
        ))}
        <MenuRule />
        <BridgeIcon>Br</BridgeIcon>
        <svg width="29" height="24">
          <rect x=".5" y="8.500" width="17" height="14" fill="#bbb" stroke="#ddd" />
          <path d="M10.500 10v12M11 15.500h6M2 9.500h14v12h-14Z" stroke="#333" fill="none" />
          <path d="M20 12h8l-4 6Z" fill="#dcdcdc" />
        </svg>
        <Grow />
        <MenuRule />
        <Workspace>Essentials</Workspace>
        <Spacer $w={10} />
        <svg width="7" height="20"><path d="M0 14.500h7l-3.500 4Z" fill="#ccc" /></svg>
        <Spacer $w={13} />
        <MenuRule />
        <Search>
          <svg width="18" height="17">
            <circle cx="10" cy="6.500" r="4" fill="none" stroke="#aaa" strokeWidth="1.300" />
            <path d="M7 9.500L3 13.500" stroke="#aaa" strokeWidth="1.500" />
          </svg>
        </Search>
        <WinButtons>
          <WinButton $w={28}><svg width="11" height="6"><rect y="3" width="11" height="3" fill="#e8e8e8" /></svg></WinButton>
          <WinButton $w={27}>
            <svg width="13" height="12" fill="none" stroke="#e8e8e8" strokeWidth="2">
              <path d="M5 4V1h7v6H8M1 5h6v5H1Z" />
            </svg>
          </WinButton>
          <WinButton $w={47}><svg width="11" height="10"><path d="M1.500 1l8 8M9.500 1l-8 8" stroke="#f0f0f0" strokeWidth="2.400" /></svg></WinButton>
        </WinButtons>
        <Spacer $w={3} />
      </MenuBar>

      <ControlBar>
        <GripV />
        <Cell $w={74}>No Selection</Cell>
        <BarRule />
        <Spacer $w={5} />
        <Combo $w={34}><Swatch $bg={STEEL} /><ComboArrow><Tri w={7} h={5} /></ComboArrow></Combo>
        <Spacer $w={7} />
        <Combo $w={34}><NoneGlyph s={17} box /><ComboArrow><Tri w={7} h={5} /></ComboArrow></Combo>
        <Spacer $w={13} />
        <Cell $w={38}><Link>Stroke:</Link></Cell>
        <NumField w={78} pad={1} />
        <Spacer $w={7} />
        <Combo $w={107} $dim><ComboField $bg="#787878" /><ComboArrow $dim><Tri c="#888" w={7} h={5} /></ComboArrow></Combo>
        <Spacer $w={7} />
        <Combo $w={104}>
          <ComboField $bg="#e6e6e6">
            <svg width="52" height="4"><path d="M2 2h46" stroke="#000" strokeWidth="2" /></svg>
            Basic
          </ComboField>
          <ComboArrow><Tri w={7} h={5} /></ComboArrow>
        </Combo>
        <Spacer $w={8} />
        <Cell $w={43}><Link>Opacity:</Link></Cell>
        <NumField w={68} value="100%" />
        <Spacer $w={6} />
        <Cell $w={32}>Style:</Cell>
        <Combo $w={34}><Swatch $bg="#e2e2e2" /><ComboArrow><Tri w={7} h={5} /></ComboArrow></Combo>
        <Spacer $w={6} />
        <BarRule />
        <Spacer $w={6} />
        <PushButton $w={112}>Document Setup</PushButton>
        <Spacer $w={7} />
        <PushButton $w={85}>Preferences</PushButton>
        <Spacer $w={11} />
        <svg width="16" height="16">
          <path d="M1.500 4.500h6v6h-6ZM9.500 1.500h5v5h-5Z" fill="#777" stroke="#999" />
          <path d="M0 3h3M0 12h3M13 0h3M14 8h2" stroke="#bbb" />
          <path d="M8 2v12l3-3 2 4 2-1-2-4h3Z" fill="#d0d0d0" stroke="#444" strokeWidth=".5" />
        </svg>
        <Spacer $w={7} />
        <Tri />
        <Grow />
        <svg width="14" height="11">
          <path d="M0 3h5L2.500 6Z" fill="#ccc" />
          <path d="M6 1.500h2M9 1.500h5M6 5.500h2M9 5.500h5M6 9.500h2M9 9.500h5" stroke="#ccc" strokeWidth="1.500" />
        </svg>
        <Spacer $w={17} />
      </ControlBar>

      <Body>
        <ToolDock>
          <DockHead><Double left /></DockHead>
          <GripH />
          <Tools items={["select", "direct", "wand", "lasso"]} on="direct" />
          <GroupRule />
          <Tools items={["pen", "type", "line", "rect", "brush", "pencil", "blob", "eraser"]} />
          <GroupRule />
          <Tools items={["rotate", "scale", "width", "free", "builder", "perspective"]} />
          <GroupRule />
          <Tools items={["mesh", "gradient", "dropper", "blend"]} />
          <GroupRule $h={3} />
          <Tools items={["spray", "graph"]} />
          <GroupRule $h={1} />
          <Tools items={["artboard", "slice", "hand", "zoom"]} />
          <GroupRule />
          <FillStroke />
          <ColorButtons $gap={2}>
            <ColorButton>
              <svg width="13" height="13"><rect x="1.500" y="1.500" width="10" height="10" fill="#4a4a4a" stroke="#000" strokeWidth="3" /></svg>
            </ColorButton>
            <ColorButton>
              <svg width="14" height="14"><rect x=".5" y=".5" width="13" height="13" fill="#fff" stroke="#000" /><rect x="2" y="2" width="10" height="10" fill="url(#toolGrad)" /></svg>
            </ColorButton>
            <ColorButton $on><NoneGlyph s={13} /></ColorButton>
          </ColorButtons>
          <ColorButtons $gap={3}>
            {[true, false, false].map((on, i) => (
              <ModeButton key={i} $on={on}>
                <svg width="14" height="12" opacity={i === 2 ? 0.3 : 1}>
                  <circle cx="6" cy="5" r="4" fill={i === 1 ? "#aaa" : "#777"} stroke="#bbb" />
                  {i < 2 && <path d="M6.500 5.500h6v6h-6Z" fill={i ? "none" : "#999"} stroke="#bbb" />}
                  {i === 1 && <circle cx="6" cy="5" r="3.600" fill="#999" stroke="#ccc" />}
                  {i === 2 && <path d="M6 5V1a4 4 0 0 1 0 8H3" fill="#ccc" />}
                </svg>
              </ModeButton>
            ))}
          </ColorButtons>
          <svg width="46" height="19">
            <rect x="23.500" y="8.500" width="15" height="9" fill="#6a6a6a" stroke="#b0b0b0" />
            <rect x="29.500" y="4.500" width="14" height="9" fill="#6e6e6e" stroke="#c4c4c4" />
            <path d="M29 4.500h15" stroke="#ddd" strokeWidth="2" />
          </svg>
        </ToolDock>

        <Doc>
          <DocTabs>
            <DocTab>part1.ai* @ 800% (RGB/Preview)<Cross /></DocTab>
          </DocTabs>
          <Work>
            <RulerCorner />
            <HRuler />
            <VRuler />
            <Artwork />
            <VScroll>
              <Tri d="up" w={9} h={6} />
              <Spacer $h={297} />
              <Thumb $w={15} $h={16} />
              <Grow />
              <Tri w={9} h={6} />
              <Spacer $h={6} />
            </VScroll>
            <Status>
              <Spacer $w={11} />
              <Tri d="right" w={5} h={8} c="#757575" />
              <Spacer $w={10} />
              <svg width="8" height="8"><path d="M0 0l6 4-6 4ZM7 0h1v8h-1Z" fill="#757575" /></svg>
              <Spacer $w={9} />
              <StatusText>Direct Selection</StatusText>
              <Spacer $w={8} />
              <Tri d="right" w={5} h={8} />
              <Spacer $w={6} />
              <HScroll>
                <Tri d="left" w={6} h={9} />
                <Spacer $w={257} />
                <Thumb $w={15} $h={16} />
                <Spacer $w={280} />
                <Tri d="right" w={6} h={9} />
              </HScroll>
            </Status>
          </Work>
        </Doc>

        <PanelDock>
          <DockHead $right><Double /></DockHead>
          <Panel $h={18}>
            <Tabs $h={17}>
              <Tab $w={59} $ls={-0.4}>Swatches</Tab>
              <Tab $w={50} $on $ls={-0.5}>Brushes</Tab>
              <Tab $w={54}>Symbols</Tab>
              <TabMenu><MenuGlyph /></TabMenu>
            </Tabs>
          </Panel>
          <Panel $h={50}>
            <Tabs>
              <Tab $w={52} $on $pl={8}><UpDown />Stroke</Tab>
              <Tab $w={54}>Gradient</Tab>
              <TabMenu><MenuGlyph /></TabMenu>
            </Tabs>
            <Row $pl={5} $h={33}>
              <Cell $w={39}>Weight:</Cell>
              <NumField w={84} pad={1} />
            </Row>
          </Panel>
          <Panel $h={153}>
            <Tabs>
              <Tab $w={51}>Actions</Tab>
              <Tab $w={40}>Links</Tab>
              <Tab $w={69} $on $ls={-0.5}>Appearance</Tab>
              <TabMenu><MenuGlyph /></TabMenu>
            </Tabs>
            <AppearanceBox>
              <AppRow>
                <Spacer $w={2} />
                <Chip $s={20} $bg={STEEL} />
                <Spacer $w={25} />
                <b>No Selection</b>
              </AppRow>
              <AppRow>
                <AppEye><Eye /></AppEye>
                <Spacer $w={5} /><Tri d="right" w={6} h={8} /><Spacer $w={11} />
                <Cell $w={42}><Link>Stroke:</Link></Cell>
                <Chip $s={17} $bg="linear-gradient(135deg,#fff 43%,#d8203c 44% 56%,#fff 57%)" />
              </AppRow>
              <AppRow>
                <AppEye><Eye /></AppEye>
                <Spacer $w={5} /><Tri d="right" w={6} h={8} /><Spacer $w={11} />
                <Cell $w={42}>Fill:</Cell>
                <Chip $s={17} $bg={STEEL} />
              </AppRow>
              <AppRow>
                <AppEye $faint><Eye /></AppEye>
                <Spacer $w={22} />
                <Cell $w={42}><Link>Opacity:</Link></Cell>
                Default
              </AppRow>
            </AppearanceBox>
            <svg width="274" height="19">
              <rect x="13" y="6" width="8" height="7" fill="#222" stroke="#c4c4c4" strokeWidth="2" />
              <rect x="38.500" y="4.500" width="9" height="9" fill="none" stroke="#aaa" />
              <rect x="40.500" y="6.500" width="5" height="5" fill="#ccc" />
              <text x="62" y="14" fontFamily="Noto Sans, sans-serif" fontStyle="italic" fontSize="13" letterSpacing="-.3" fill="#dcdcdc">fx</text>
              <path d="M73 12h6l-3 3Z" fill="#ccc" />
              <circle cx="188.500" cy="9.500" r="4.500" fill="none" stroke="#c0c0c0" strokeWidth="1.500" />
              <path d="M185.500 6.500l6 6" stroke="#c0c0c0" strokeWidth="1.500" />
              <path d="M210 4h9v10h-4v-5h-5Z M210 10h4v4Z" fill="#707070" />
              <path d="M235 5.500h11M238 4.500h5M236.500 7.500v7h8v-7M239 8v6M242 8v6" stroke="#707070" fill="none" />
              <path d="M272 8v2M270 11h4M267 14h7M264 17h10" stroke="#777" strokeDasharray="1 1" />
            </svg>
          </Panel>
          <Panel $h={50}>
            <Tabs>
              <Tab $w={60}>Transform</Tab>
              <Tab $w={36}>Align</Tab>
              <Tab $w={61} $ls={-0.45}>Pathfinder</Tab>
              <Tab $w={78} $on $ls={-0.55} $pl={6}><UpDown />Transparency</Tab>
              <TabMenu><MenuGlyph /></TabMenu>
            </Tabs>
            <Row $pl={6} $h={33}>
              <Dropdown>Normal<DropdownRule /><Tri /></Dropdown>
              <Spacer $w={21} />
              <Cell $w={41}>Opacity:</Cell>
              <NumField w={62} value="100%" />
            </Row>
          </Panel>
          <Panel $h={372}>
            <Tabs>
              <Tab $w={43} $on $ls={-0.6}>Layers</Tab>
              {["Artbo", "Chara", "Open", "Color", "Parag"].map((t) => (
                <Tab key={t} $w={31} $ls={-0.75}>{t}</Tab>
              ))}
              <Tab $w={36} $ls={-0.6}>Color (</Tab>
              <TabMenu><MenuGlyph /></TabMenu>
            </Tabs>
            <LayerBox>
              <LayerList>
                {layers.map((l, i) => (
                  <LayerRow key={i} $kind={l.kind}>
                    <LayerCell $w={21}>{!l.hidden && <Eye />}</LayerCell>
                    <LayerCell $w={21} />
                    <Strip $c={i < 2 ? "#ff50f0" : "#5050ff"} />
                    <LayerName $nested={l.kind === "item"}>
                      {l.kind !== "item" && (
                        <>
                          {l.open ? <Tri w={8} h={6} /> : <><Tri d="right" w={6} h={8} /><Spacer $w={2} /></>}
                          <Spacer $w={8} />
                        </>
                      )}
                      <LayerThumb kind={l.thumb} />
                      <Spacer $w={l.kind === "item" ? 6 : 5} />
                      {l.name}
                    </LayerName>
                    <Target />
                    {l.kind === "sel" && <Corner />}
                  </LayerRow>
                ))}
              </LayerList>
              <LayerScroll>
                <Tri d="up" w={7} h={4} />
                <Spacer $h={6} />
                <Thumb $w={11} $h={80} />
                <Grow />
                <Tri w={7} h={5} />
              </LayerScroll>
            </LayerBox>
            <Footer>
              14 Layers
              <Grow />
              <svg width="145" height="16">
                <circle cx="10" cy="6" r="3.500" fill="none" stroke="#777" strokeWidth="1.300" />
                <path d="M7.500 9L4 13" stroke="#777" strokeWidth="1.500" />
                <path d="M27.500 2.500h6.500v7h-6.500Z" fill="none" stroke="#c4c4c4" />
                <path d="M30.500 5.500h7v7h-7Z" fill="#777" stroke="#c4c4c4" strokeWidth="1.500" />
                <path d="M52 4h5M55 1.500L58 4l-3 2.500M54 6v3h4" fill="none" stroke="#c4c4c4" strokeWidth="1.300" />
                <path d="M58 3h8v10h-4v-5h-4ZM58 9h3v4Z" fill="#b5b5b5" />
                <path d="M80 3h10v10h-5v-5h-5ZM80 9h4v4Z" fill="#b5b5b5" />
                <path d="M105 4.500h12M108.500 2.500h5M106.500 6.500l1 7h7l1-7M109.500 7v6M112.500 7v6" stroke="#c4c4c4" fill="none" strokeWidth="1.200" />
              </svg>
            </Footer>
          </Panel>
        </PanelDock>
      </Body>

      <InfoWindow>
        <InfoHead><Double left /><Cross /></InfoHead>
        <Tabs $h={17}>
          <Tab $w={62} $ls={-0.4}>Navigator</Tab>
          <Tab $w={39} $on $pl={8}><UpDown />Info</Tab>
          <TabMenu><MenuGlyph /></TabMenu>
        </Tabs>
        <InfoGrid>
          <svg width="22" height="44"><path d="M2 22.500h13M8.500 16v13" stroke="#aaa" /></svg>
          <InfoCol $w={18} $gap={4}><span>X:</span><span>Y:</span></InfoCol>
          <InfoCol $w={72} $gap={4}><span>1.3976 in</span><span>3.2361 in</span></InfoCol>
          <InfoRule $h={35} />
          <svg width="24" height="44">
            <path d="M4.500 27V17.500h10" fill="none" stroke="#c4c4c4" />
            <path d="M13 14.500l4 3-4 3ZM2 26h5l-2.500 4Z" fill="#c4c4c4" />
            <path d="M8 29.500h7.500V21" fill="none" stroke="#aaa" strokeDasharray="1 1" />
          </svg>
          <InfoCol $w={21} $gap={7}><span>W:</span><span>H:</span></InfoCol>
          <InfoCol $w={50} $gap={7}><span>0 in</span><span>0 in</span></InfoCol>
        </InfoGrid>
        <InfoFoot><InfoRule $h={16} /></InfoFoot>
      </InfoWindow>
    </App_>
  );
}
